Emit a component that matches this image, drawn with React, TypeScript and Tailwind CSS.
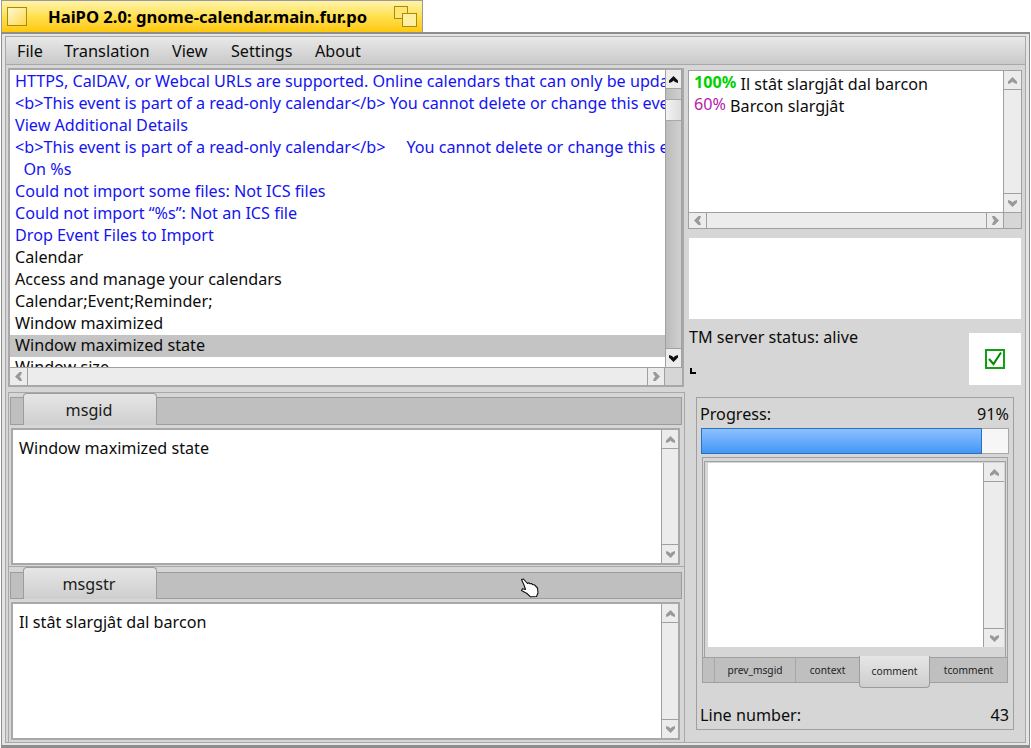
import React from "react";

type Dir = "up" | "down" | "left" | "right";

function Arrow({ dir, dark }: { dir: Dir; dark?: boolean }) {
  const rot = { up: 0, right: 90, down: 180, left: 270 }[dir];
  return (
    <svg width="11" height="9" viewBox="0 0 11 9" style={{ transform: `rotate(${rot}deg)` }}>
      <polygon points="5.5,1 10,5.5 10,8 7,7 5.5,5.5 4,7 1,8 1,5.5" fill={dark ? "#111111" : "#999999"} />
    </svg>
  );
}

function Btn({ dir, dark, cls }: { dir: Dir; dark?: boolean; cls: string }) {
  return (
    <div className={`flex shrink-0 items-center justify-center bg-[#ececec] ${cls}`}>
      <Arrow dir={dir} dark={dark} />
    </div>
  );
}

function VBar({ width = "w-[17px]" }: { width?: string }) {
  return (
    <div className={`flex h-full shrink-0 flex-col border-l border-[#a0a0a0] bg-[#ececec] ${width}`}>
      <Btn dir="up" cls="h-[19px] border-b border-[#a0a0a0]" />
      <div className="flex-1" />
      <Btn dir="down" cls="h-[19px] border-t border-[#a0a0a0]" />
    </div>
  );
}

const rows = [
  "HTTPS, CalDAV, or Webcal URLs are supported. Online calendars that can only be updated",
  "<b>This event is part of a read-only calendar</b> You cannot delete or change this event.",
  "View Additional Details",
  "<b>This event is part of a read-only calendar</b>     You cannot delete or change this event",
  "  On %s",
  "Could not import some files: Not ICS files",
  "Could not import “%s”: Not an ICS file",
  "Drop Event Files to Import",
];
const blackRows = ["Calendar", "Access and manage your calendars", "Calendar;Event;Reminder;", "Window maximized"];

function TabHead({ label, barTop }: { label: string; barTop: string }) {
  return (
    <div className="ml-[1px] mr-[2px] flex h-[32px] shrink-0">
      <div className={`${barTop} w-[13px] flex-none border-y border-l border-[#9c9c9c] bg-[#bfbfbf]`} />
      <div className="flex h-[32px] w-[134px] items-center justify-center rounded-t-[4px] border border-b-0 border-[#9c9c9c] bg-gradient-to-b from-[#e6e6e6] to-[#cecece] pr-[2px] text-[#1a1a1a]">
        {label}
      </div>
      <div className={`${barTop} flex-1 border-y border-r border-[#9c9c9c] bg-[#bfbfbf]`} />
    </div>
  );
}

function Editor({ text, h }: { text: string; h: string }) {
  return (
    <div className={`ml-[2px] mr-[4px] mt-[3px] flex border-2 border-[#a8a8a8] bg-white ${h}`}>
      <div className="flex-1 overflow-hidden pl-[6px] pt-[7px] leading-[22px]">{text}</div>
      <VBar />
    </div>
  );
}

function Hand() {
  return (
    <svg className="absolute left-[520px] top-[578px]" width="20" height="20" viewBox="0 0 20 20">
      <path
        d="M1.5 1.5 L3.5 1 L7.5 5.5 L8.5 4.8 L10 5.8 L11.5 5.5 L13 6.8 L14.5 6.8 L17.5 10 L18 15 L16.5 18.5 L10.5 18.8 L7 15.5 L1.5 12.5 L2.5 10.8 L5.5 11.5 L4 7 Z"
        fill="#ffffff"
        stroke="#111111"
        strokeWidth="1.1"
        strokeLinejoin="round"
      />
    </svg>
  );
}

export default function App() {
  return (
    <div className="relative flex h-[748px] w-[1031px] flex-col overflow-hidden bg-white font-['Noto_Sans',sans-serif] text-[16.16px] leading-[22px] text-[#0c0c0c]">
      <div className="ml-[1px] flex h-[32px] w-[422px] shrink-0 items-center border border-b-0 border-[#9a9a9a] bg-gradient-to-b from-[#fff3a8] via-[#ffe04a] to-[#ffc800] pl-[5px] pr-[5px]">
        <div className="h-[19px] w-[20px] border border-[#a88a10] bg-gradient-to-br from-[#fff8cf] to-[#ffd83a]" />
        <div className="ml-[21px] flex-1 whitespace-nowrap text-[16.6px] font-bold text-black">HaiPO 2.0: gnome-calendar.main.fur.po</div>
        <div className="relative h-[21px] w-[23px]">
          <div className="absolute left-0 top-0 h-[13px] w-[14px] border border-[#a88a10] bg-[#ffe571]" />
          <div className="absolute bottom-0 right-0 h-[14px] w-[15px] border border-[#a88a10] bg-[#fff0a0]" />
        </div>
      </div>

      <div className="ml-[1px] flex h-[716px] w-[1029px] shrink-0 flex-col border-x border-t-2 border-b-[3px] border-[#8e8e8e] bg-[#e4e4e4] p-[2px] pl-[3px] pr-[3px]">
        <div className="flex min-h-0 flex-1 flex-col border border-[#a8a8a8] bg-[#d6d6d6]">
          <div className="flex h-[28px] shrink-0 items-center border-b border-[#a8a8a8] bg-gradient-to-b from-[#e9e9e9] to-[#c9c9c9] pl-[11px]">
            <span className="w-[47px]">File</span>
            <span className="w-[108px] text-[16.4px]">Translation</span>
            <span className="w-[59px]">View</span>
            <span className="w-[84px]">Settings</span>
            <span>About</span>
          </div>

          <div className="mt-[3px] flex h-[320px] shrink-0 pl-[2px]">
            <div className="flex h-[319px] w-[676px] flex-col border-2 border-[#a8a8a8]">
              <div className="flex h-[297px] bg-white">
                <div className="w-[655px] overflow-hidden whitespace-pre pt-[1px] leading-[20px]">
                  {rows.map((r) => (
                    <div key={r} className="h-[22px] pl-[5px] text-[#1414f0]">
                      {r}
                    </div>
                  ))}
                  {blackRows.map((r) => (
                    <div key={r} className="h-[22px] pl-[5px]">
                      {r}
                    </div>
                  ))}
                  <div className="h-[22px] bg-[#c4c4c4] pl-[5px]">Window maximized state</div>
                  <div className="h-[22px] pl-[5px]">Window size</div>
                </div>
                <div className="flex w-[17px] flex-col border-x border-[#a0a0a0] bg-gradient-to-r from-[#bcbcbc] to-[#d0d0d0]">
                  <Btn dir="up" dark cls="h-[19px] border-b border-[#a0a0a0]" />
                  <div className="mt-[10px] h-[22px] border-y border-[#a8a8a8] bg-gradient-to-r from-[#f2f2f2] to-[#dedede]" />
                  <div className="flex-1" />
                  <Btn dir="down" dark cls="h-[19px] border-t border-[#a0a0a0]" />
                </div>
              </div>
              <div className="flex h-[18px] flex-1 border-t border-[#a0a0a0] bg-[#ececec]">
                <Btn dir="left" cls="w-[18px] border-r border-[#a0a0a0]" />
                <div className="flex-1" />
                <Btn dir="right" cls="w-[18px] border-x border-[#a0a0a0]" />
                <div className="w-[17px] bg-[#d6d6d6]" />
              </div>
            </div>

            <div className="ml-[4px] mt-[2px] flex w-[336px] flex-col">
              <div className="flex h-[159px] w-[334px] flex-col border border-[#a0a0a0]">
                <div className="flex h-[141px] bg-white">
                  <div className="flex-1 pl-[5px] pt-[2px]">
                    <div className="h-[22px]">
                      <span className="relative top-[-2px] font-bold text-[#00d000]">100%</span> Il stât slargjât dal barcon
                    </div>
                    <div className="h-[22px]">
                      <span className="relative top-[-2px] text-[#b820a8]">60%</span> Barcon slargjât
                    </div>
                  </div>
                  <VBar width="w-[18px]" />
                </div>
                <div className="flex flex-1 border-t border-[#a0a0a0] bg-[#ececec]">
                  <Btn dir="left" cls="w-[18px] border-r border-[#a0a0a0]" />
                  <div className="flex-1" />
                  <Btn dir="right" cls="w-[18px] border-x border-[#a0a0a0]" />
                  <div className="w-[17px] bg-[#d6d6d6]" />
                </div>
              </div>
              <div className="ml-[1px] mt-[9px] h-[81px] w-[332px] shrink-0 bg-white" />
              <div className="ml-[1px] mt-[7px] flex h-[59px] w-[332px]">
                <div className="flex flex-1 flex-col">
                  <div className="h-[22px]">TM server status: alive</div>
                  <div className="ml-[1px] mt-[20px] h-[6px] w-[6px] border-b-2 border-l-2 border-black" />
                </div>
                <div className="flex h-[52px] w-[52px] items-center justify-center self-end bg-white">
                  <svg width="20" height="20" viewBox="0 0 20 20">
                    <rect x="1" y="1" width="18" height="18" fill="#ffffff" stroke="#10a010" strokeWidth="2" />
                    <path d="M4 10 L8.5 15 L16 3.5" fill="none" stroke="#008800" strokeWidth="2" />
                  </svg>
                </div>
              </div>
            </div>
          </div>

          <div className="mt-[4px] flex min-h-0 flex-1 pl-[2px]">
            <div className="flex h-[350px] w-[677px] flex-col border-x border-t border-[#a8a8a8]">
              <TabHead label="msgid" barTop="mt-[4px] h-[28px]" />
              <Editor text="Window maximized state" h="h-[137px] shrink-0" />
              <div className="mt-[1px] h-[1px] shrink-0 bg-[#a8a8a8]" />
              <TabHead label="msgstr" barTop="mt-[5px] h-[27px]" />
              <Editor text="Il stât slargjât dal barcon" h="h-[138px] shrink-0" />
            </div>

            <div className="ml-[11px] mt-[5px] flex h-[333px] w-[318px] flex-col border border-[#a0a0a0] pl-[3px] pr-[4px]">
              <div className="mt-[5px] flex h-[22px] justify-between">
                <span>Progress:</span>
                <span>91%</span>
              </div>
              <div className="ml-[1px] mt-[3px] flex h-[26px]">
                <div className="h-full w-[281px] border border-[#2a6fc0] bg-gradient-to-b from-[#8cc0ff] to-[#3f97f5]" />
                <div className="h-full flex-1 border-y border-r border-[#a8a8a8] bg-[#f6f6f6]" />
              </div>
              <div className="ml-[2px] mt-[3px] h-[200px] w-[306px] border-x border-t border-[#a0a0a0] px-[1px] pt-[3px]">
                <div className="h-full border-x border-t border-[#a0a0a0] pl-[3px] pr-[1px] pt-[1px]">
                  <div className="flex h-[184px] bg-white">
                    <div className="flex-1" />
                    <VBar width="w-[21px]" />
                  </div>
                </div>
              </div>
              <div className="ml-[2px] flex h-[26px] w-[306px] border border-[#a0a0a0] bg-[#bfbfbf] text-[10.2px] leading-[24px] text-[#222222]">
                <div className="w-[12px] border-r border-[#a8a8a8]" />
                <div className="w-[81px] border-r border-[#a8a8a8] text-center">prev_msgid</div>
                <div className="w-[63px] text-center">context</div>
                <div className="mt-[-2px] h-[32px] w-[71px] rounded-b-[4px] border border-t-0 border-[#9c9c9c] bg-gradient-to-b from-[#e6e6e6] to-[#cecece] pt-[3px] text-center">
                  comment
                </div>
                <div className="flex-1 text-center">tcomment</div>
              </div>
              <div className="mt-[21px] flex h-[22px] justify-between">
                <span>Line number:</span>
                <span>43</span>
              </div>
            </div>
          </div>
        </div>
      </div>
      <Hand />
    </div>
  );
}
